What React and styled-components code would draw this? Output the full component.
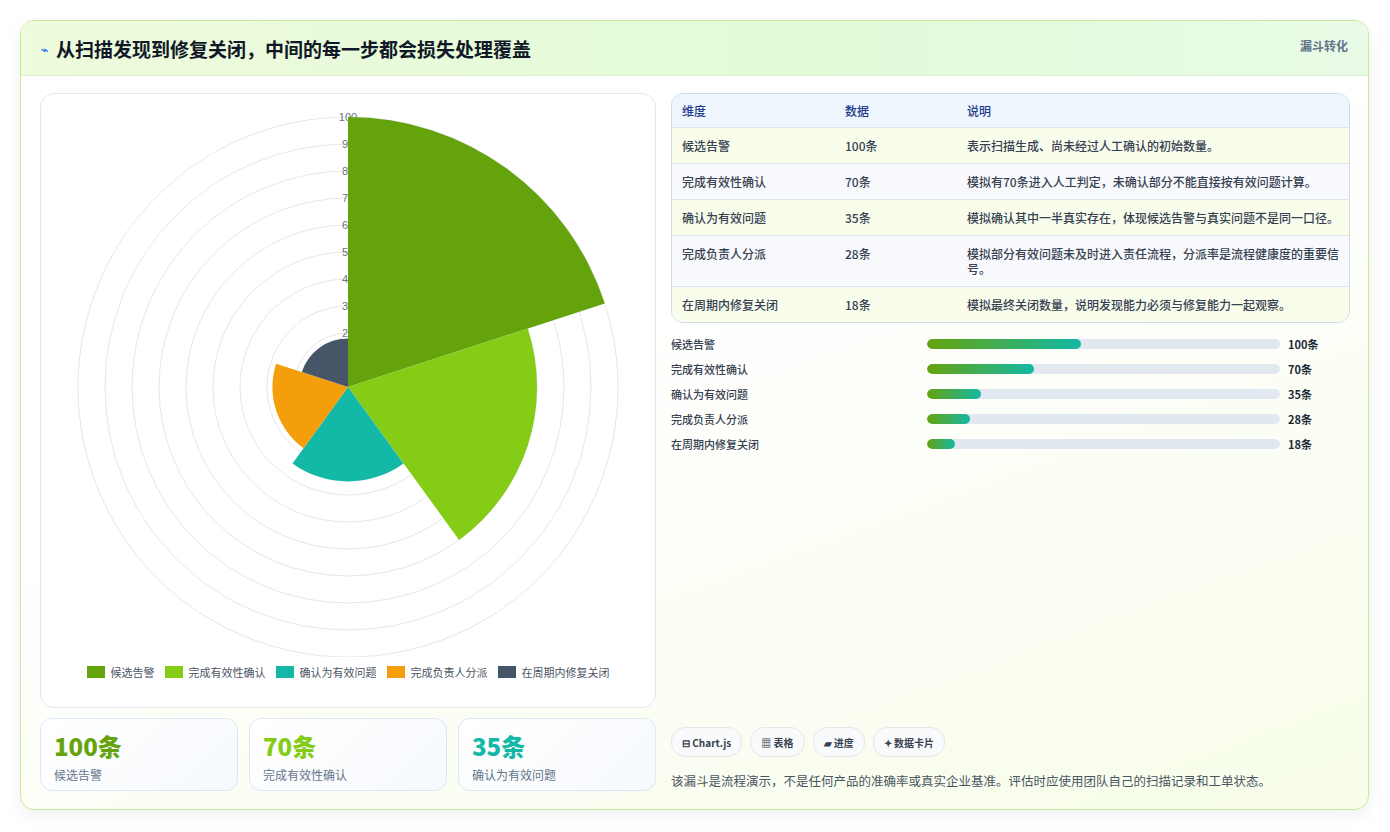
import styled, { createGlobalStyle } from "styled-components";

const Global = createGlobalStyle`
  body { margin: 0; background: #f3f4f6; font-family: "Noto Sans CJK SC", "Noto Sans", sans-serif; }
`;

const Shell = styled.div`
  width: 1390px; height: 832px; box-sizing: border-box;
  padding: 20px 21px 22px 20px; background: #fff;
`;
const Card = styled.div`
  height: 100%; box-sizing: border-box;
  border: 1px solid #c6eb9a; border-radius: 14px; overflow: hidden;
  background: linear-gradient(160deg, #ffffff 40%, #f7fde9 100%);
  box-shadow: 0 6px 18px rgba(0,0,0,.06);
  display: flex; flex-direction: column;
`;
const Head = styled.div`
  height: 55px; box-sizing: border-box; padding: 0 20px;
  display: flex; align-items: center; justify-content: space-between;
  background: linear-gradient(90deg, #eefbdc, #e2fad8 60%, #e9fbe6);
  border-bottom: 1px solid #dff0cc;
  h1 { margin: 0; font-size: 19px; font-weight: 700; color: #111827; display: flex; gap: 8px; align-items: center; }
  span.tag { align-self: flex-start; margin-top: 16px; font-size: 12px; font-weight: 700; color: #64748b; }
`;
const Body = styled.div`
  flex: 1; display: grid; grid-template-columns: 616px 1fr; gap: 15px;
  padding: 17px 18px 17px 19px;
`;
const Col = styled.div` display: flex; flex-direction: column; gap: 10px; min-width: 0; `;
const ChartBox = styled.div`
  height: 615px; box-sizing: border-box; border: 1px solid #e5e7eb; border-radius: 14px; background: #fff;
  display: flex; flex-direction: column; align-items: center;
`;
const Legend = styled.div`
  display: flex; gap: 10px; font-size: 11px; color: #4b5563; margin-top: 2px;
`;
const LegItem = styled.div`
  display: flex; align-items: center; gap: 6px;
  i { width: 18px; height: 12px; background: ${p => p.$c}; display: block; }
`;
const Stats = styled.div` display: grid; grid-template-columns: repeat(3, 1fr); gap: 11px; `;
const Stat = styled.div`
  height: 73px; box-sizing: border-box; border: 1px solid #dbe7f3; border-radius: 12px;
  background: linear-gradient(135deg, #fff, #f6f9fd); padding: 12px 13px;
  b { display: block; font-size: 24px; line-height: 30px; color: ${p => p.$c}; font-weight: 800; }
  span { font-size: 12px; color: #64748b; }
`;
const Table = styled.div`
  border: 1px solid #cfdbe8; border-radius: 12px; overflow: hidden; font-size: 12px; color: #374151;
`;
const Row = styled.div`
  display: grid; grid-template-columns: 163px 122px 1fr; padding: ${p => p.$h ? "9px 10px" : "10px 10px"};
  background: ${p => p.$h ? "#eef5fd" : p.$alt ? "#f7f9fc" : "#f8fdec"};
  border-bottom: 1px solid #dde6ee; font-weight: 500;
  color: ${p => p.$h ? "#1e3a8a" : "#374151"};
  &:last-child { border-bottom: none; }
  line-height: 15px;
  min-height: ${p => p.$h ? "14px" : "15px"};
  div { padding: ${p => p.$h ? "0" : "0"}; }
`;
const Bars = styled.div` display: flex; flex-direction: column; gap: 9px; margin-top: 3px; `;
const BarRow = styled.div`
  display: grid; grid-template-columns: 256px 353px 1fr; align-items: center; gap: 0;
  font-size: 11px; color: #374151; font-weight: 500; height: 16px;
  em { font-style: normal; font-weight: 700; padding-left: 8px; color: #1f2937; }
`;
const Track = styled.div` height: 10px; border-radius: 5px; background: #e2e8f0; overflow: hidden; `;
const Fill = styled.div` height: 100%; border-radius: 5px; background: linear-gradient(90deg, #65a30d, #14b8a6); `;
const Foot = styled.div` margin-top: auto; display: flex; flex-direction: column; gap: 14px; padding-bottom: 2px; `;
const Chips = styled.div` display: flex; gap: 8px; `;
const Chip = styled.div`
  height: 28px; padding: 0 10px; border: 1px solid #e5e7eb; border-radius: 14px; background: #f9fafb;
  display: flex; align-items: center; gap: 4px; font-size: 10px; font-weight: 700; color: #374151;
`;
const Note = styled.p` margin: 0; font-size: 12.5px; color: #4b5563; `;

const data = [
  ["候选告警", 100, "#65a30d", "表示扫描生成、尚未经过人工确认的初始数量。"],
  ["完成有效性确认", 70, "#84cc16", "模拟有70条进入人工判定，未确认部分不能直接按有效问题计算。"],
  ["确认为有效问题", 35, "#14b8a6", "模拟确认其中一半真实存在，体现候选告警与真实问题不是同一口径。"],
  ["完成负责人分派", 28, "#f59e0b", "模拟部分有效问题未及时进入责任流程，分派率是流程健康度的重要信号。"],
  ["在周期内修复关闭", 18, "#475569", "模拟最终关闭数量，说明发现能力必须与修复能力一起观察。"],
];

function Polar() {
  const cx = 307, cy = 290, k = 2.7;
  const pt = (r, a) => [cx + r * Math.cos(a), cy + r * Math.sin(a)];
  return (
    <svg width="614" height="560">
      {[1,2,3,4,5,6,7,8,9,10].map(i => (
        <circle key={i} cx={cx} cy={cy} r={i * 27} fill="none" stroke="#e5e7eb" />
      ))}
      {[2,3,4,5,6,7,8,9,10].map(i => (
        <text key={i} x={cx} y={cy - i * 27 + 4} fontSize="11" fill="#6b7280" textAnchor="middle" fontFamily="Liberation Sans">{i * 10}</text>
      ))}
      {data.map(([n, v, c], i) => {
        const a0 = -Math.PI / 2 + i * 2 * Math.PI / 5, a1 = a0 + 2 * Math.PI / 5, r = v * k;
        const [x0, y0] = pt(r, a0), [x1, y1] = pt(r, a1);
        return <path key={n} d={`M${cx} ${cy} L${x0} ${y0} A${r} ${r} 0 0 1 ${x1} ${y1} Z`} fill={c} />;
      })}
    </svg>
  );
}

export default function App() {
  return (
    <Shell>
      <Global />
      <Card>
        <Head>
          <h1><span style={{ fontSize: 12, color: "#3b82f6" }}>⌁</span>从扫描发现到修复关闭，中间的每一步都会损失处理覆盖</h1>
          <span className="tag">漏斗转化</span>
        </Head>
        <Body>
          <Col>
            <ChartBox>
              <div style={{ marginTop: 3 }}><Polar /></div>
              <Legend>
                {data.map(([n, , c]) => <LegItem key={n} $c={c}><i />{n}</LegItem>)}
              </Legend>
            </ChartBox>
            <Stats>
              {data.slice(0, 3).map(([n, v, c]) => (
                <Stat key={n} $c={c}><b>{v}条</b><span>{n}</span></Stat>
              ))}
            </Stats>
          </Col>
          <Col>
            <Table>
              <Row $h><div>维度</div><div>数据</div><div>说明</div></Row>
              {data.map(([n, v, , d], i) => (
                <Row key={n} $alt={i % 2 === 1}><div>{n}</div><div>{v}条</div><div>{d}</div></Row>
              ))}
            </Table>
            <Bars>
              {data.map(([n, v]) => (
                <BarRow key={n}>
                  <span>{n}</span>
                  <Track><Fill style={{ width: `${v * 0.435}%` }} /></Track>
                  <em>{v}条</em>
                </BarRow>
              ))}
            </Bars>
            <Foot>
              <Chips>
                <Chip>⊟ Chart.js</Chip>
                <Chip>▦ 表格</Chip>
                <Chip>▰ 进度</Chip>
                <Chip>✦ 数据卡片</Chip>
              </Chips>
              <Note>该漏斗是流程演示，不是任何产品的准确率或真实企业基准。评估时应使用团队自己的扫描记录和工单状态。</Note>
            </Foot>
          </Col>
        </Body>
      </Card>
    </Shell>
  );
}
